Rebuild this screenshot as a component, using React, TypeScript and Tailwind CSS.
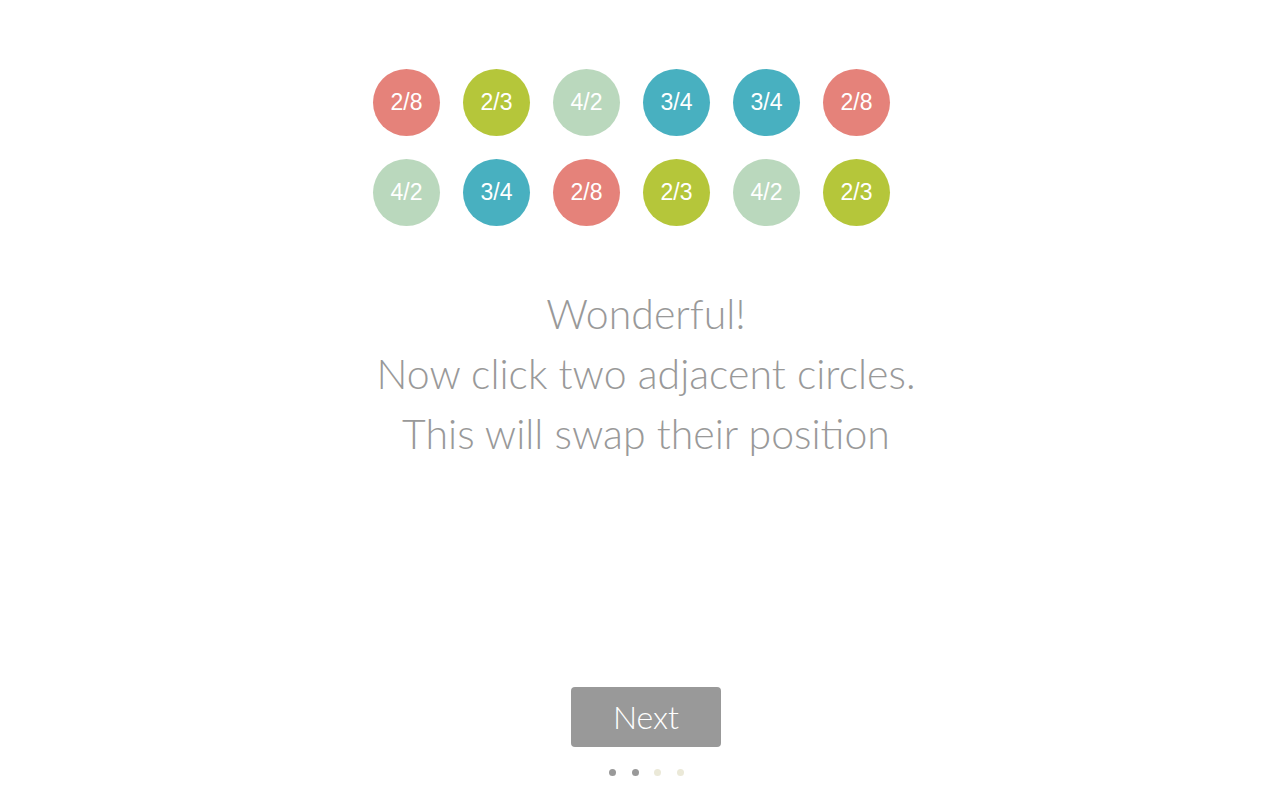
const rows = [
  [
    { label: "2/8", color: "bg-[#e5827a]" },
    { label: "2/3", color: "bg-[#b5c63a]" },
    { label: "4/2", color: "bg-[#bad8bd]" },
    { label: "3/4", color: "bg-[#48b0c0]" },
    { label: "3/4", color: "bg-[#48b0c0]" },
    { label: "2/8", color: "bg-[#e5827a]" },
  ],
  [
    { label: "4/2", color: "bg-[#bad8bd]" },
    { label: "3/4", color: "bg-[#48b0c0]" },
    { label: "2/8", color: "bg-[#e5827a]" },
    { label: "2/3", color: "bg-[#b5c63a]" },
    { label: "4/2", color: "bg-[#bad8bd]" },
    { label: "2/3", color: "bg-[#b5c63a]" },
  ],
]

export default function App() {
  return (
    <div className="w-[1280px] h-[800px] bg-white flex flex-col items-center font-['Lato',sans-serif]">
      {/* Circles */}
      <div className="mt-[69px] mr-[17px] flex flex-col gap-[23px]">
        {rows.map((row, r) => (
          <div key={r} className="flex gap-[23px]">
            {row.map((c, i) => (
              <div
                key={i}
                className={`w-[67px] h-[67px] rounded-full flex items-center justify-center text-white text-[23px] font-['Liberation_Sans',Arial,sans-serif] ${c.color}`}
              >
                {c.label}
              </div>
            ))}
          </div>
        ))}
      </div>

      {/* Message */}
      <div className="mt-[58px] ml-[12px] text-center text-[#999] text-[41px] leading-[60px] font-light">
        <p>Wonderful!</p>
        <p>Now click two adjacent circles.</p>
        <p>This will swap their position</p>
      </div>

      <div className="flex-1" />

      {/* Next */}
      <button className="ml-[12px] w-[150px] h-[60px] rounded-[4px] bg-[#999] text-white text-[32px] font-light">
        Next
      </button>

      {/* Pager dots */}
      <div className="ml-[13px] mt-[22px] mb-[24px] flex gap-[15.5px]">
        <span className="w-[7px] h-[7px] rounded-full bg-[#999]" />
        <span className="w-[7px] h-[7px] rounded-full bg-[#999]" />
        <span className="w-[7px] h-[7px] rounded-full bg-[#ebe9d8]" />
        <span className="w-[7px] h-[7px] rounded-full bg-[#ebe9d8]" />
      </div>
    </div>
  )
}
